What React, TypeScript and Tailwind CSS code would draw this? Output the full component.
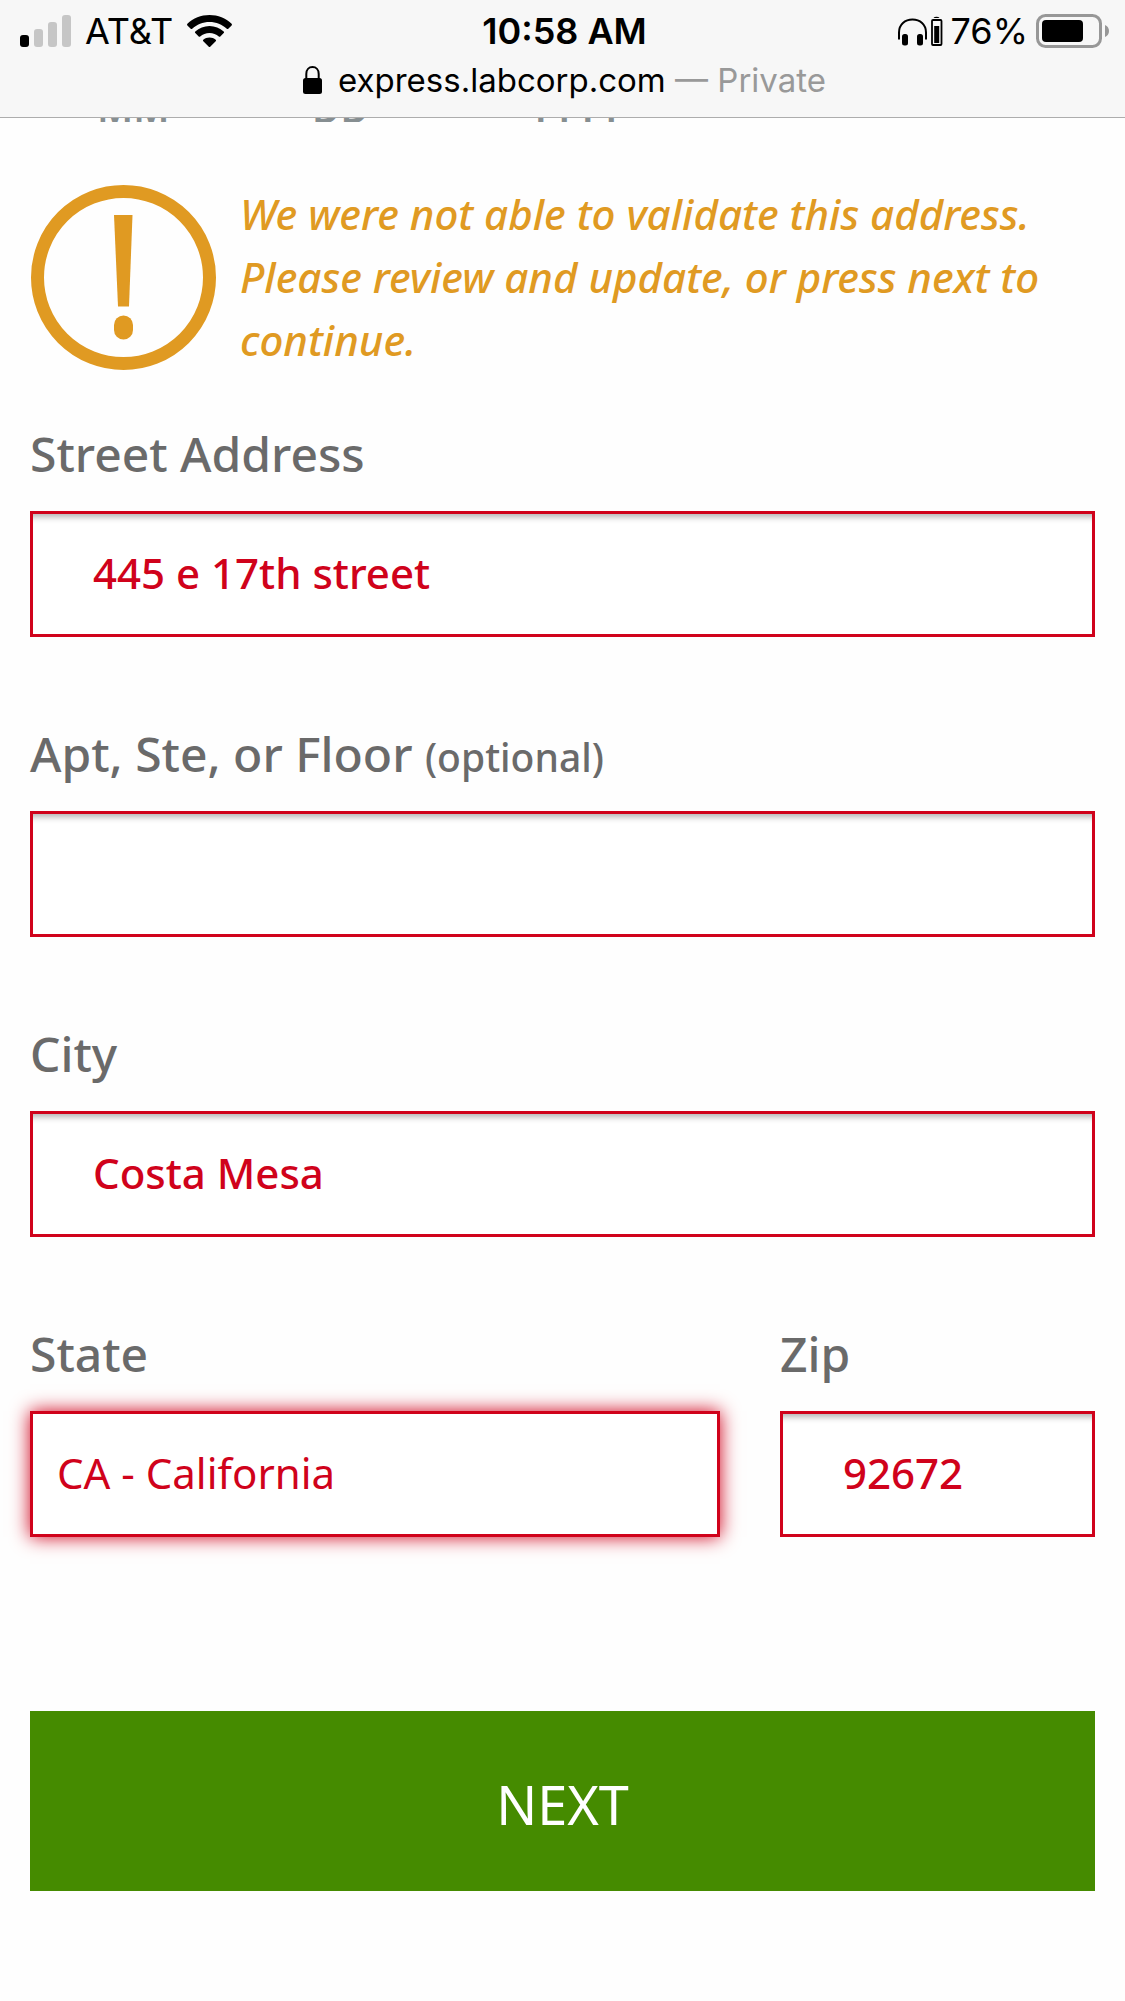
import type { ReactNode } from "react";

function SignalIcon() {
  return (
    <svg width="51" height="32" viewBox="0 0 51 32" aria-hidden="true">
      <rect x="0" y="20" width="9" height="12" rx="3" fill="#000" />
      <rect x="14" y="14" width="9" height="18" rx="3" fill="#c6c6c6" />
      <rect x="28" y="7" width="9" height="25" rx="3" fill="#c6c6c6" />
      <rect x="42" y="0" width="9" height="32" rx="3" fill="#c6c6c6" />
    </svg>
  );
}

function WifiIcon() {
  return (
    <svg width="45" height="33" viewBox="0 0 45 33" aria-hidden="true">
      <path d="M22.500 0C14 0 6.200 3.300 0.400 8.800c-.5.500-.5 1.100 0 1.600l3.300 3.300c.4.400 1 .4 1.500 0C9.800 9.500 15.800 7 22.500 7s12.700 2.500 17.300 6.700c.5.400 1.100.4 1.500 0l3.300-3.300c.5-.5.500-1.100 0-1.600C38.800 3.300 31 0 22.500 0z" />
      <path d="M22.500 11c-5.400 0-10.400 2.100-14.200 5.600-.5.500-.5 1.100 0 1.500l3.400 3.400c.4.400 1 .4 1.500 0 2.500-2.200 5.700-3.600 9.300-3.600s6.800 1.400 9.300 3.600c.5.400 1.100.4 1.500 0l3.400-3.400c.5-.4.500-1 0-1.500-3.800-3.500-8.800-5.600-14.200-5.600z" />
      <path d="M22.500 22.500c-2.400 0-4.500.8-6.200 2.200-.5.400-.5 1 0 1.500l5.500 5.600c.4.400 1 .4 1.400 0l5.500-5.600c.5-.5.500-1.100 0-1.500-1.700-1.400-3.800-2.200-6.200-2.200z" />
    </svg>
  );
}

function HeadphonesIcon() {
  return (
    <svg width="45" height="30" viewBox="0 0 45 30" aria-hidden="true">
      <path
        d="M1 23.500V16.500C1 8.500 7 3.500 14.500 3.500S28 8.500 28 16.500v7"
        fill="none"
        stroke="#000"
        strokeWidth="2"
      />
      <rect x="4" y="18" width="6" height="11.500" rx="2.500" />
      <rect x="19" y="18" width="6" height="11.500" rx="2.500" />
      <path d="M35.500 2a3.200 2 0 0 1 6 0z" />
      <rect x="34" y="4" width="9.500" height="25" rx="1" fill="none" stroke="#000" strokeWidth="1.800" />
      <rect x="36.200" y="10" width="5" height="17" />
    </svg>
  );
}

function BatteryIcon() {
  return (
    <svg width="73" height="34" viewBox="0 0 73 34" aria-hidden="true">
      <rect x="1.500" y="1.500" width="63" height="31" rx="8" fill="none" stroke="#979797" strokeWidth="3" />
      <rect x="6" y="6" width="41" height="22" rx="4" fill="#000" />
      <path d="M69 11c2.500 1 4 3.300 4 6s-1.500 5-4 6z" fill="#979797" />
    </svg>
  );
}

function LockIcon() {
  return (
    <svg width="19" height="28" viewBox="0 0 19 28" aria-hidden="true">
      <path d="M3.300 13V8c0-4.200 2.600-6.900 6.200-6.900S15.700 3.800 15.700 8v5" fill="none" stroke="#000" strokeWidth="2" />
      <rect x="0" y="12" width="19" height="16" rx="2.500" />
    </svg>
  );
}

function WarningIcon() {
  return (
    <svg className="shrink-0" width="188" height="188" viewBox="0 0 188 188" aria-hidden="true" fill="#e09a22">
      <circle cx="93.500" cy="94.500" r="86" fill="none" stroke="#e09a22" strokeWidth="13" />
      <path d="M84 32H102.500L99 123.500H88z" />
      <rect x="84" y="132.500" width="19" height="24" rx="9.500" />
    </svg>
  );
}

function Field({ id, label, hint, children }: { id: string; label: string; hint?: string; children: ReactNode }) {
  return (
    <div className="flex min-w-0 flex-col gap-6">
      <label htmlFor={id} className="text-[48px] leading-[66px] font-medium text-[#6a6a6a]">
        {label}
        {hint && (
          <>
            {" "}
            <span className="text-[39px] leading-none">{hint}</span>
          </>
        )}
      </label>
      {children}
    </div>
  );
}

const inputClass =
  "h-[126px] w-full rounded-none border-3 border-[#d0021b] bg-white px-[60px] pb-1 text-[42px] font-medium text-[#d0021b] shadow-[inset_0_9px_6px_-6px_rgba(0,0,0,0.3)] outline-none";

export default function App() {
  return (
    <div className="min-h-screen overflow-hidden bg-[#fefefe] font-['Noto_Sans','Open_Sans',sans-serif]">
      <header className="h-[118px] border-b border-[#adadad] bg-[#f7f7f7] font-['Inter','Liberation_Sans',sans-serif] text-black">
        <div className="grid h-[62px] grid-cols-[1fr_auto_1fr] items-center pr-4 pl-5 text-[36px]">
          <div className="flex items-center gap-3.5">
            <SignalIcon />
            <span>AT&amp;T</span>
            <WifiIcon />
          </div>
          <span className="font-semibold">10:58 AM</span>
          <div className="flex items-center justify-end gap-2">
            <HeadphonesIcon />
            <span>76%</span>
            <BatteryIcon />
          </div>
        </div>
        <div className="flex items-center justify-center gap-4 pl-1 text-[33px] leading-[36px]">
          <LockIcon />
          <span>
            express.labcorp.com <span className="text-[#999999]">— Private</span>
          </span>
        </div>
      </header>

      <main className="px-[30px]">
        <div className="flex h-1 items-end overflow-hidden pl-[67px] text-[39px] leading-[50px] font-semibold text-[#868e91]">
          <span className="-mb-[11px] w-[215px]">MM</span>
          <span className="-mb-[11px] w-[217px]">DD</span>
          <span className="-mb-[11px]">YYYY</span>
        </div>

        <div role="alert" className="mt-[60px] flex items-center gap-[22px]">
          <WarningIcon />
          <p className="text-[42px] leading-[63px] font-medium text-[#e09a22] italic">
            We were not able to validate this address. Please review and update, or press next to continue.
          </p>
        </div>

        <form className="mt-[50px] flex flex-col" onSubmit={(e) => e.preventDefault()}>
          <div className="flex flex-col gap-[84px]">
            <Field id="street" label="Street Address">
              <input id="street" type="text" defaultValue="445 e 17th street" className={inputClass} />
            </Field>
            <Field id="apt" label="Apt, Ste, or Floor" hint="(optional)">
              <input id="apt" type="text" className={inputClass} />
            </Field>
            <Field id="city" label="City">
              <input id="city" type="text" defaultValue="Costa Mesa" className={inputClass} />
            </Field>
            <div className="grid grid-cols-[690fr_315fr] gap-[60px]">
              <Field id="state" label="State">
                <select
                  id="state"
                  defaultValue="CA"
                  className="h-[126px] w-full appearance-none rounded-none border-3 border-[#d0021b] bg-white px-6 pb-1 text-[42px] text-[#d0021b] shadow-[0_0_18px_#d0021b] outline-none"
                >
                  <option value="CA">CA - California</option>
                </select>
              </Field>
              <Field id="zip" label="Zip">
                <input id="zip" type="text" defaultValue="92672" className={inputClass} />
              </Field>
            </div>
          </div>
          <button type="submit" className="mt-[174px] h-[180px] w-full bg-[#458b00] pt-1.5 text-[54px] text-white">
            NEXT
          </button>
        </form>
      </main>
    </div>
  );
}
